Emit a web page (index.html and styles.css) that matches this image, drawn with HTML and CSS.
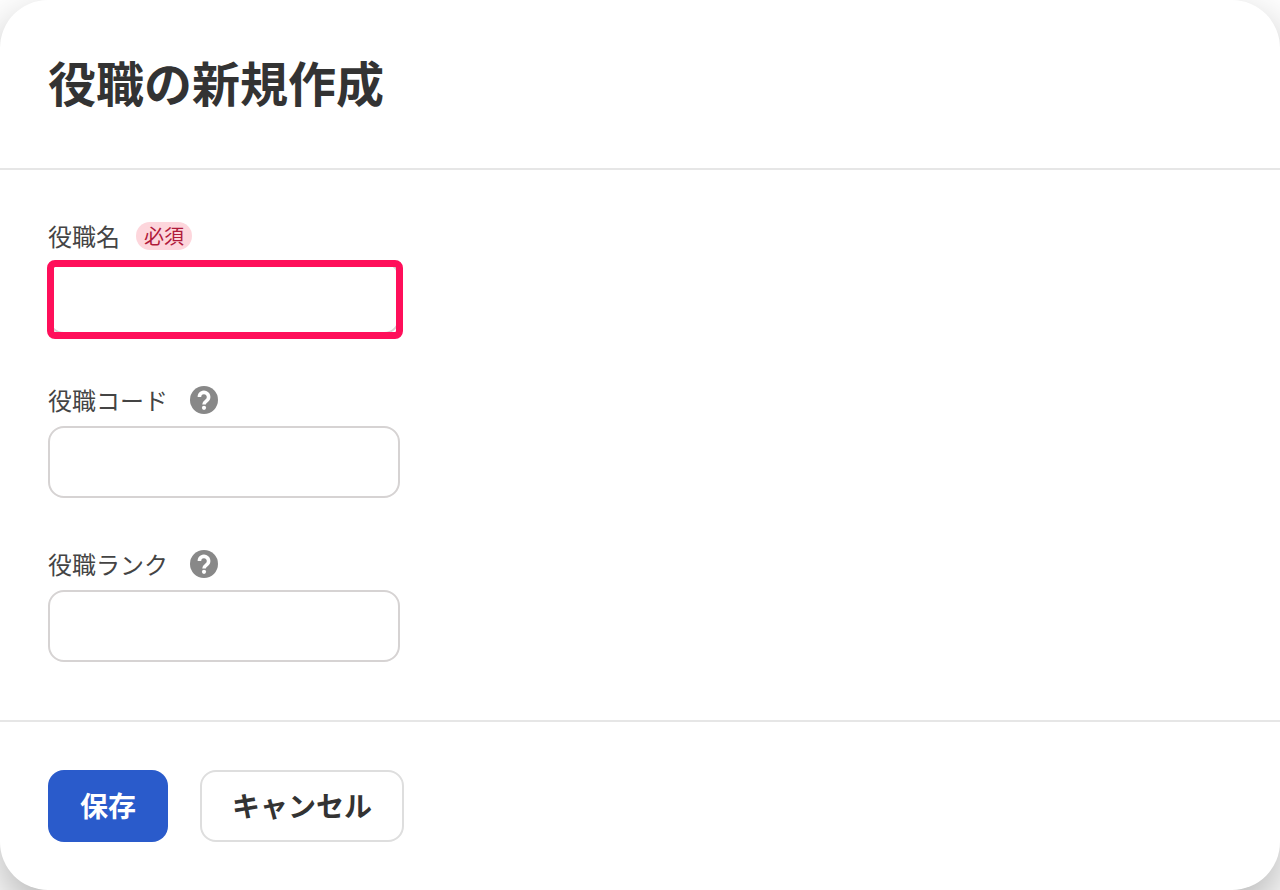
FILE: index.html
```html
<!DOCTYPE html>
<html lang="ja">
<head>
<meta charset="utf-8">
<title>役職の新規作成</title>
<link rel="stylesheet" href="styles.css">
</head>
<body>
<div class="modal">
  <header class="modal-header"><h1 class="modal-title">役職の新規作成</h1></header>
  <form class="modal-body">
    <div class="field">
      <div class="label-row"><label class="label">役職名</label><span class="badge">必須</span></div>
      <div class="input-wrap"><input class="input" type="text"><span class="highlight"></span></div>
    </div>
    <div class="field">
      <div class="label-row"><label class="label">役職コード</label>
        <svg class="help" viewBox="0 0 28 28" aria-hidden="true"><circle class="help-disc" cx="14" cy="14" r="14"/><path class="help-mark" d="M9.4 11a4.6 4.6 0 1 1 7.4 3.6c-1.7 1.3-2.8 2-2.8 4"/><circle class="help-dot" cx="14" cy="21.8" r="2.1"/></svg>
      </div>
      <div class="input-wrap"><input class="input" type="text"></div>
    </div>
    <div class="field">
      <div class="label-row"><label class="label">役職ランク</label>
        <svg class="help" viewBox="0 0 28 28" aria-hidden="true"><circle class="help-disc" cx="14" cy="14" r="14"/><path class="help-mark" d="M9.4 11a4.6 4.6 0 1 1 7.4 3.6c-1.7 1.3-2.8 2-2.8 4"/><circle class="help-dot" cx="14" cy="21.8" r="2.1"/></svg>
      </div>
      <div class="input-wrap"><input class="input" type="text"></div>
    </div>
  </form>
  <footer class="modal-footer">
    <button class="btn btn-primary" type="button">保存</button>
    <button class="btn btn-secondary" type="button">キャンセル</button>
  </footer>
</div>
</body>
</html>
```
FILE: styles.css
```css
* { box-sizing: border-box; }
html, body { margin: 0; height: 890px; overflow: hidden; }
body {
  background: #fff;
  font-family: "Noto Sans CJK JP", "Liberation Sans", sans-serif;
  color: #333;
}
.modal {
  width: 1280px;
  height: 890px;
  background: #fff;
  border-radius: 48px;
  box-shadow: 0 20px 48px rgba(0, 0, 0, 0.3);
  display: flex;
  flex-direction: column;
}
.modal-header {
  height: 170px;
  padding: 45px 48px 0;
  border-bottom: 2px solid #e6e6e6;
}
.modal-title {
  margin: 0;
  font-size: 48px;
  line-height: 72px;
  font-weight: 700;
  color: #333;
}
.modal-body {
  flex: 1;
  padding: 48px 48px 0;
  display: flex;
  flex-direction: column;
  gap: 48px;
}
.label-row {
  height: 36px;
  margin-bottom: 8px;
  display: flex;
  align-items: center;
}
.label { font-size: 24px; line-height: 36px; color: #444; }
.badge {
  margin-left: 16px;
  width: 56px;
  height: 28px;
  border-radius: 14px;
  background: #fdd6dc;
  color: #b01a3a;
  font-size: 20px;
  line-height: 28px;
  text-align: center;
}
.help { margin-left: 22px; width: 28px; height: 28px; }
.help-disc { fill: #888; }
.help-mark { fill: none; stroke: #fff; stroke-width: 3.6; }
.help-dot { fill: #fff; }
.input-wrap { position: relative; width: 352px; height: 72px; }
.input {
  display: block;
  width: 100%;
  height: 100%;
  border: 2px solid #d6d3d3;
  border-radius: 16px;
  background: #fff;
  outline: none;
}
.highlight {
  position: absolute;
  top: -2px;
  left: -1px;
  right: -3px;
  bottom: -5px;
  border: 7px solid #ff0f5a;
  border-radius: 8px;
}
.modal-footer {
  height: 170px;
  padding: 48px;
  border-top: 2px solid #e6e6e6;
  display: flex;
  gap: 32px;
}
.btn {
  height: 72px;
  border-radius: 16px;
  font-family: inherit;
  font-size: 28px;
  font-weight: 700;
  padding: 0 0 2px;
}
.btn-primary { width: 120px; background: #2a5bcb; border: 0; color: #fff; }
.btn-secondary { width: 204px; background: #fff; border: 2px solid #dedede; color: #333; }
```
